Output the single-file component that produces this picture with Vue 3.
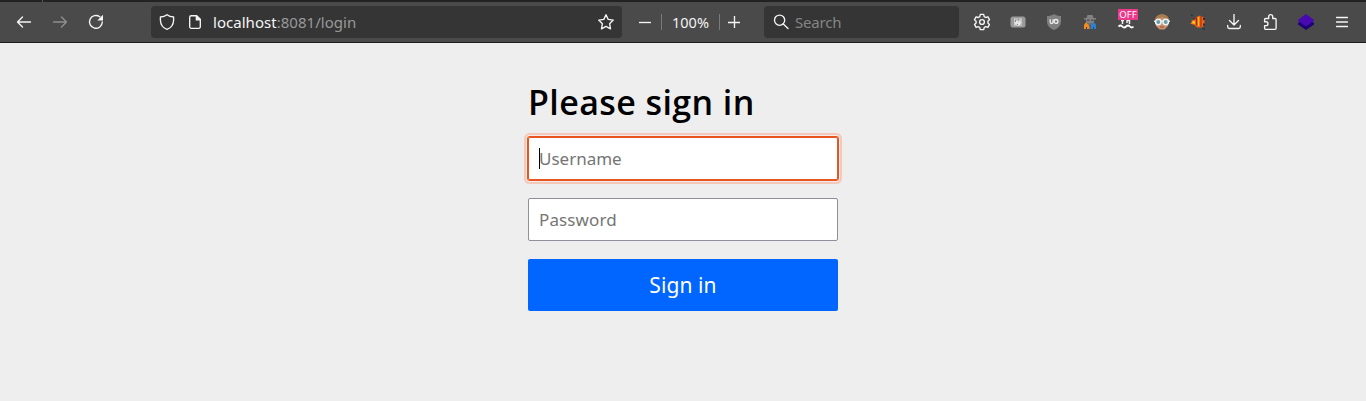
<script setup>
import { ref } from 'vue'

const username = ref('')
const password = ref('')
</script>

<template>
  <div class="window">
    <header class="toolbar">
      <nav class="nav">
        <span class="tool"><svg width="16" height="16" viewBox="0 0 16 16"><path d="M14.500 8H1.500M6.500 3 1.500 8l5 5" /></svg></span>
        <span class="tool dim"><svg width="16" height="16" viewBox="0 0 16 16"><path d="M1.500 8h13M9.500 3l5 5-5 5" /></svg></span>
        <span class="tool"><svg width="16" height="16" viewBox="0 0 16 16"><path d="M11.800 2.800A6.400 6.400 0 1 0 14.300 8" /><path class="solid" d="M15 .8v5.700H9.300z" /></svg></span>
      </nav>

      <div class="urlbar">
        <svg class="shield" width="16" height="16" viewBox="0 0 16 16"><path d="M8 .8C6.200 2.200 3.800 2.900 1.400 3v3.200C1.600 10.800 4.200 14 8 15.300 11.800 14 14.400 10.800 14.600 6.200V3C12.200 2.900 9.800 2.200 8 .8z" /></svg>
        <svg class="page" width="16" height="16" viewBox="0 0 16 16"><path d="M9.500 1.700H4.200a1.500 1.500 0 0 0-1.500 1.500v9.600a1.500 1.500 0 0 0 1.500 1.500h7.600a1.500 1.500 0 0 0 1.500-1.500V5.500z" /><path class="solid" d="M8.700 1.200H10L14 5.200v1.300H8.700z" /></svg>
        <span class="url"><b>localhost</b>:8081/login</span>
        <svg class="star" width="18" height="18" viewBox="0 0 18 18"><path d="m9 1.700 2.200 4.700 5.100.7-3.700 3.600.9 5.200L9 13.400l-4.500 2.500.9-5.200L1.700 7.100l5.100-.7z" /></svg>
      </div>

      <div class="zoom">
        <svg width="12" height="12" viewBox="0 0 12 12"><path d="M0 6.500h12" /></svg>
        <i></i>
        <span class="level">100%</span>
        <i></i>
        <svg width="12" height="12" viewBox="0 0 12 12"><path d="M0 6.500h12M6.500 0v12" /></svg>
      </div>

      <div class="search">
        <svg width="16" height="16" viewBox="0 0 16 16"><circle cx="6.600" cy="6.200" r="5.100" /><path d="m10.300 9.900 4.700 4.700" /></svg>
        <span>Search</span>
      </div>

      <div class="extensions">
        <span class="tool"><svg width="18" height="18" viewBox="0 0 18 18"><path d="m7.300 1.400h3.400l.5 2.200 1.500.9 2.200-.7 1.600 2.900-1.600 1.500v1.700l1.600 1.500-1.600 2.900-2.200-.7-1.500.9-.5 2.200H7.300l-.5-2.200-1.500-.9-2.200.7-1.600-2.900 1.600-1.500V8.200L1.500 6.700l1.600-2.900 2.200.7 1.500-.9z" /><circle cx="9" cy="9" r="2.400" /></svg></span>
        <span class="tool"><svg class="plain" width="16" height="16" viewBox="0 0 16 16"><rect x=".5" y="2.500" width="15" height="11" rx="2.500" fill="#9b9b9b" /><rect x="4" y="4" width="8" height="8" fill="#b8b8b8" /><path d="M4.500 4.500 6 7l1.500-1L8 8l3.500-3.500L10 8l2-.5-2 3.500-2 1-2-1.500L4.500 11z" fill="#e5e5e5" /><path d="M5 6h1v2H5zM8 5h1v1H8zM7 10h1v1H7z" fill="#888" /></svg></span>
        <span class="tool"><svg class="plain" width="16" height="16" viewBox="0 0 16 16"><path d="M8 0c2 1.500 4.500 2 7 2v5.500C15 12 11.500 14.700 8 16 4.500 14.700 1 12 1 7.500V2c2.500 0 5-.5 7-2z" fill="#808080" /><path d="M4.200 5.300v2.700c0 2 2.900 2 2.900 0V5.300" fill="none" stroke="#eee" stroke-width="1.300" /><circle cx="10" cy="7.400" r="1.900" fill="none" stroke="#eee" stroke-width="1.300" /></svg></span>
        <span class="tool"><svg class="plain" width="16" height="16" viewBox="0 0 16 16"><path d="M5.500 1h5l1 3H14v1.500h-2V8l-2 2H6L4 8V5.500H2V4h2.500z" fill="#828282" /><path d="M5 5.500h2.500V7H5zM9 5.500h2.500V7H9z" fill="#555" /><path d="M6 9h4v2H6z" fill="#707070" /><path d="M4 8 7.500 12v3H2v-4z" fill="#f28b22" /><path d="M12 8 8.500 12v3H14v-4z" fill="#2883d8" /><path d="M4 13h1v2H4z" fill="#444" /><path d="M11 13h1v2h-1z" fill="#444" /></svg></span>
        <span class="tool badged">
          <svg class="plain" width="16" height="16" viewBox="0 0 16 16"><path d="M3 6.500h3M4.500 6v4M9 9V6.500h2.500V10" fill="none" stroke="#eee" stroke-width="1.500" /><path d="M.5 12.500q2-2 3.800 0t3.800 0 3.800 0 3.600 0" fill="none" stroke="#fff" stroke-width="1.800" /></svg>
          <em>OFF</em>
        </span>
        <span class="tool"><svg class="plain" width="16" height="16" viewBox="0 0 16 16"><path d="M1 7C1 3 4 .5 8 .5S15 3 15 7l-1 5-3.500 3.500h-5L2 12z" fill="#c89270" /><path d="M1 6C1.500 2.500 4 .5 8 .5s6.500 2 7 5.500L11 4 8 3 5 4.500z" fill="#a77b4c" /><path d="M0 6.500h16V8H0z" fill="#dce7e9" /><circle cx="4.300" cy="8" r="2.700" fill="#6b9ba5" stroke="#eef2f2" stroke-width="1.500" /><circle cx="11.700" cy="8" r="2.700" fill="#6b9ba5" stroke="#eef2f2" stroke-width="1.500" /><path d="M6 12.500h4v1H6z" fill="#a34c3d" /></svg></span>
        <span class="tool"><svg class="plain" width="16" height="16" viewBox="0 0 16 16"><path d="M1 .5h2V2H1zM12.500 14h2.500v1.500h-2.500z" fill="#263745" /><path d="m4 6 2-3 4-1.500 3 1.500 1.500 2v6L12 13.500H7L4.500 11 0 9.500 3 8 1 6z" fill="#ef6418" /><path d="M6 3.500h1v8H6zM10.500 2h1v11h-1z" fill="#9f251b" /><path d="M8 3h1.200v9H8zM3 7h2v3L1 9z" fill="#ffc51b" /><path d="M13 4h2v2h-2zM13 9.500h2v2h-2zM4.500 3.500h1v2h-1z" fill="#302c2b" /></svg></span>
        <span class="tool"><svg width="16" height="16" viewBox="0 0 16 16"><path d="M8 .5v10M3.500 6.500 8 11l4.500-4.500M1.700 11.500v1.300q0 1.700 1.700 1.700h9.200q1.700 0 1.700-1.700v-1.300" /></svg></span>
        <span class="tool"><svg width="16" height="16" viewBox="0 0 16 16"><path d="M3.300 15.300H13q1.100 0 1.100-1.100V5.500q0-1-1-1h-2.400V2.700c0-2.700-4-2.700-4 0v1.800H3.500q-.9 0-.9 1v2.200h1.500c2.500 0 2.500 3.900 0 3.900H2.600v2.700q0 1 .7 1z" /></svg></span>
        <span class="tool"><svg class="plain" width="16" height="16" viewBox="0 0 16 16"><path d="M0 9l8-5 8 5v1.500L8 16 0 10.500z" fill="#200075" /><path d="m8 0 8 6v.8L8 12.500 0 6.800V6z" fill="#4909b0" /></svg></span>
        <span class="tool"><svg width="12" height="12" viewBox="0 0 12 12"><path d="M.5 1.500h11M.5 6h11M.5 10.500h11" /></svg></span>
      </div>
    </header>

    <main>
      <form @submit.prevent>
        <h1>Please sign in</h1>
        <div class="field focused">
          <span class="caret"></span>
          <input v-model="username" class="user" type="text" placeholder="Username">
        </div>
        <div class="field">
          <input v-model="password" class="pass" type="password" placeholder="Password">
        </div>
        <button type="submit">Sign in</button>
      </form>
    </main>
  </div>
</template>

<style>
body { margin: 0; background: #eee; }
</style>

<style scoped>
* { box-sizing: border-box; }
.window { height: 401px; overflow: hidden; background: #eee; font-family: "Noto Sans", "Open Sans", sans-serif; }
.toolbar { position: relative; height: 43px; display: flex; align-items: center; padding: 0 6px; background: #4a4a4a; border-top: 2px solid #222; border-bottom: 1px solid #1c1b1e; }
.toolbar::before { content: ""; position: absolute; left: 42px; top: -2px; width: 1px; height: 2px; background: #555; }
.nav, .extensions { display: flex; }
.tool { width: 36px; height: 32px; display: flex; align-items: center; justify-content: center; }
.dim { opacity: .4; }
svg { display: block; flex: none; fill: none; stroke: #f5f5f5; stroke-width: 1.35; stroke-linejoin: round; stroke-linecap: round; }
.plain { stroke: none; stroke-linecap: butt; }
.solid { fill: #f5f5f5; stroke: none; }
.urlbar { width: 471px; height: 32px; margin-left: 37px; padding: 0 7px 0 8px; display: flex; align-items: center; border-radius: 4px; background: #353535; }
.page { margin-left: 12px; }
.url { margin-left: 10px; flex: 1; color: #999; font-size: 15px; letter-spacing: .03px; line-height: 32px; white-space: nowrap; }
.url b { color: #f5f5f5; font-weight: 400; }
.zoom { width: 142px; padding-left: 17px; display: flex; align-items: center; }
.zoom svg { stroke-linecap: butt; }
.zoom i { width: 1px; height: 16px; background: #7b7b7b; margin-left: 10px; }
.zoom .level { width: 57px; margin-right: -10px; text-align: center; color: #f3f3f3; font-size: 14.5px; }
.zoom i:last-of-type + svg { margin-left: 8px; }
.search { width: 195px; height: 32px; padding-left: 9px; display: flex; align-items: center; background: #353535; border-radius: 4px; color: #858585; font-size: 15px; letter-spacing: -.2px; }
.search span { margin-left: 6px; }
.extensions { margin-left: 5px; }
.badged { position: relative; }
.badged em { position: absolute; left: 10px; top: 3px; width: 20px; height: 11px; background: #ee388b; color: #fff; font-size: 9.5px; line-height: 11px; font-style: normal; text-align: center; }
form { width: 310px; margin: 0 auto; padding-top: 34px; }
h1 { margin: 0 0 9px; height: 51px; line-height: 51px; font-family: "Open Sans", sans-serif; font-size: 34px; font-weight: 600; letter-spacing: .4px; white-space: nowrap; color: #000; }
.field { height: 43px; margin-bottom: 18px; position: relative; }
.focused { border-radius: 2px; box-shadow: 0 0 0 1px #e95420, 0 0 0 2px #f1eeed, 0 0 0 4px #f5c9ba; }
input { display: block; width: 100%; height: 43px; padding: 0 10px 1px; border: 1px solid #8f8f9d; border-radius: 2px; outline: 0; background: #fff; color: #000; font-family: "Noto Sans", sans-serif; font-size: 17px; }
.focused input { border-color: #e95420; }
.pass { letter-spacing: .12px; }
input::placeholder { color: #757575; opacity: 1; }
.caret { position: absolute; left: 11px; top: 11px; width: 1px; height: 21px; background: #000; }
button { display: block; width: 310px; height: 52px; border: 0; border-radius: 2px; padding: 0; background: #06f; color: #fff; font-family: "Noto Sans", sans-serif; font-size: 21px; letter-spacing: .1px; }
</style>
